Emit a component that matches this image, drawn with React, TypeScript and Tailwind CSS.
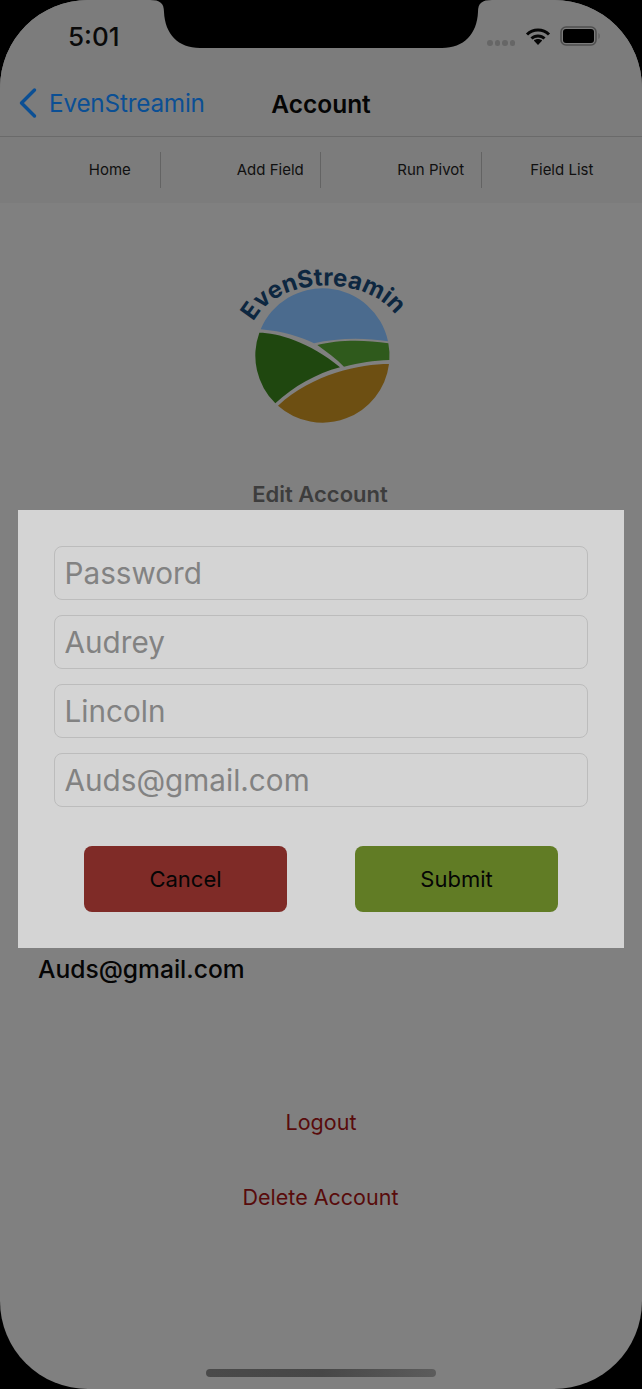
export default function App() {
  return (
    <div className="relative w-[642px] h-[1389px] bg-black overflow-hidden font-['Inter','Liberation_Sans',sans-serif]">
      <div className="relative h-full w-full bg-[#808080] rounded-[88px] flex flex-col overflow-hidden">
        <StatusBar />
        <div className="relative h-[69px] flex items-center bg-[#7c7c7c] border-b border-[#6a6a6a] shrink-0">
          <svg width="20" height="32" viewBox="0 0 20 32" className="ml-[18px] mt-[2px]" fill="none">
            <path d="M16.5 3 L3.5 16 L16.5 29" stroke="#0b4f94" strokeWidth="3.4" strokeLinecap="round" strokeLinejoin="round" />
          </svg>
          <span className="ml-[11px] mt-[3px] text-[24.3px] text-[#0b4f94] tracking-[-0.2px]">EvenStreamin</span>
          <span className="absolute left-0 right-0 top-[18px] text-center text-[24.5px] font-semibold text-[#050505]">Account</span>
        </div>
        <div className="h-[66px] flex items-center bg-[#7c7c7c] shrink-0">
          {["Home", "Add Field", "Run Pivot"].map((t) => (
            <div key={t} className="w-[160.5px] h-[36px] pl-[60px] flex items-center justify-center border-r border-[#636363] text-[15px] text-[#101010]">
              {t}
            </div>
          ))}
          <div className="flex-1 h-[36px] flex items-center justify-center text-[15px] text-[#101010]">Field List</div>
        </div>
        <Logo />
        <div className="mt-[51px] pr-[2px] text-center text-[22px] font-semibold text-[#3d3d3d] leading-[26px]">Edit Account</div>
        <div className="mt-[448px] pl-[38px] text-[24.6px] font-medium text-[#050505] leading-[28px]">Auds@gmail.com</div>
        <div className="mt-[126px] text-center text-[21.5px] text-[#580b0b] leading-[26px]">Logout</div>
        <div className="mt-[49px] pr-[1px] text-center text-[21.5px] text-[#580b0b] leading-[26px]">Delete Account</div>
        <div className="absolute left-[206px] top-[1369px] w-[230px] h-[8px] rounded-full bg-gradient-to-r from-[#4a4a4a] via-[#474747] to-[#5c5c5c]" />
      </div>

      <div className="absolute left-[18px] top-[510px] w-[606px] h-[438px] bg-[#d4d4d4] px-[36px] pt-[36px] flex flex-col">
        <div className="flex flex-col gap-[15px]">
          {["Password", "Audrey", "Lincoln", "Auds@gmail.com"].map((p) => (
            <input
              key={p}
              readOnly
              placeholder={p}
              className="h-[54px] w-full rounded-[8px] border border-[#bcbcbc] bg-transparent px-[9.5px] text-[29.7px] placeholder:text-[#828282] outline-none"
            />
          ))}
        </div>
        <div className="mt-[39px] px-[30px] flex justify-between">
          <div className="w-[203px] h-[66px] rounded-[8px] bg-[#7f2b27] flex items-center justify-center text-[22px] text-[#050505]">Cancel</div>
          <div className="w-[203px] h-[66px] rounded-[8px] bg-[#617c25] flex items-center justify-center text-[22px] text-[#050505]">Submit</div>
        </div>
      </div>
    </div>
  );
}

function StatusBar() {
  return (
    <div className="relative h-[68px] bg-[#7c7c7c] shrink-0">
      <svg className="absolute left-[150px] top-0" width="342" height="48" viewBox="0 0 342 48">
        <path d="M0 0 C10 0 14 3 14 12 C15 34 28 48 50 48 L292 48 C314 48 327 34 328 12 C328 3 332 0 342 0 Z" fill="#000" />
      </svg>
      <span className="absolute left-[68px] top-[21px] text-[26px] font-medium leading-[32px] text-[#0a0a0a]">5:01</span>
      <div className="absolute left-[487px] top-[40px] flex gap-[2px]">
        {[0, 1, 2, 3].map((i) => (
          <span key={i} className="w-[5.5px] h-[5.5px] rounded-full bg-[#666666]" />
        ))}
      </div>
      <svg className="absolute left-[525px] top-[26px]" width="26" height="20" viewBox="0 0 26 20" fill="none" stroke="#050505" strokeWidth="3">
        <path d="M2 8.5 C8 2.5 18 2.5 24 8.5" />
        <path d="M6.5 12.5 C10 9 16 9 19.5 12.5" />
        <path d="M13 19 L8.8 14.6 C11 12.6 15 12.6 17.2 14.6 Z" fill="#050505" stroke="none" />
      </svg>
      <svg className="absolute left-[560px] top-[26px]" width="42" height="20" viewBox="0 0 42 20" fill="none">
        <rect x="1" y="1" width="35" height="18" rx="5" stroke="#4e4e4e" strokeWidth="1.6" />
        <rect x="3" y="3" width="31" height="14" rx="3" fill="#000" />
        <path d="M38.5 7 C40 7.5 40 12.5 38.5 13 Z" fill="#5a5a5a" />
      </svg>
    </div>
  );
}

function Logo() {
  return (
    <svg className="mt-[57px] mx-auto block shrink-0" width="200" height="170" viewBox="0 0 600 510">
      <g transform="translate(-3 0)">
        <path d="M122 208 A201 201 0 0 1 504 244 C430 232 350 234 282 250 C240 230 190 214 122 208 Z" fill="#4b6b8e" />
        <path d="M118 218 C170 218 270 245 360 322 C290 340 220 380 166 430 A201 201 0 0 1 118 218 Z" fill="#1f470f" />
        <path d="M292 255 C350 240 430 238 505 250 A201 201 0 0 1 508 300 C460 302 420 308 372 320 C350 298 320 275 292 255 Z" fill="#2f5a1c" />
        <path d="M507 312 C420 312 280 340 174 437 A201 201 0 0 0 507 312 Z" fill="#6d4f12" />
      </g>
      <path id="logoArc" d="M97 185 C172 40 462 40 537 187" fill="none" />
      <text fontFamily="'Inter','Liberation Sans',sans-serif" fontWeight="700" fontSize="72" fill="#0d2740">
        <textPath href="#logoArc">EvenStreamin</textPath>
      </text>
    </svg>
  );
}
